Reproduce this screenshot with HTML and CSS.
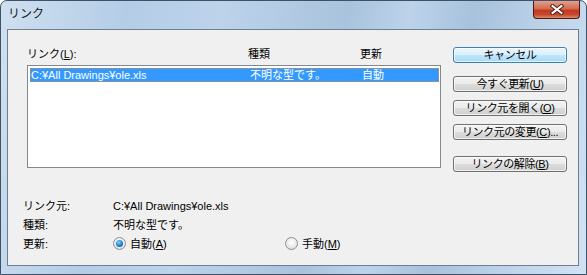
FILE: index.html
```html
<!DOCTYPE html>
<html>
<head>
    <meta charset="UTF-8">
    <title>リンク</title>
    <link rel="stylesheet" href="styles.css">
</head>
<body>
    <div class="window">
        <!-- タイトルバー -->
        <div class="titlebar">
            <span class="title">リンク</span>
            <div class="close-btn">
                <svg width="14" height="11" viewBox="0 0 14 11">
                    <path d="M2.5 2 L11.5 9 M11.5 2 L2.5 9" stroke="#4a2018" stroke-width="4" stroke-linecap="square"/>
                    <path d="M2.5 2 L11.5 9 M11.5 2 L2.5 9" stroke="#ffffff" stroke-width="2" stroke-linecap="square"/>
                </svg>
            </div>
        </div>

        <div class="client">
            <div class="main">
                <div class="left">
                    <div class="cols header">
                        <span>リンク(<u>L</u>):</span>
                        <span>種類</span>
                        <span>更新</span>
                    </div>
                    <div class="listbox">
                        <div class="cols row selected">
                            <span>C:¥All Drawings¥ole.xls</span>
                            <span>不明な型です。</span>
                            <span>自動</span>
                        </div>
                    </div>
                </div>
                <div class="buttons">
                    <button class="default">キャンセル</button>
                    <button>今すぐ更新(<u>U</u>)</button>
                    <button>リンク元を開く(<u>O</u>)</button>
                    <button>リンク元の変更(<u>C</u>)...</button>
                    <button class="gap">リンクの解除(<u>B</u>)</button>
                </div>
            </div>

            <!-- 詳細 -->
            <div class="info">
                <div class="info-row"><span class="label">リンク元:</span><span>C:¥All Drawings¥ole.xls</span></div>
                <div class="info-row"><span class="label">種類:</span><span>不明な型です。</span></div>
                <div class="info-row">
                    <span class="label">更新:</span>
                    <span class="radio checked"></span><span class="radio-text auto">自動(<u>A</u>)</span>
                    <span class="radio"></span><span class="radio-text">手動(<u>M</u>)</span>
                </div>
            </div>
        </div>
    </div>
</body>
</html>
```
FILE: styles.css
```css
body {
    margin: 0;
    background: #ffffff;
    font-family: "Liberation Sans", "Noto Sans CJK JP", sans-serif;
    font-size: 11px;
    color: #000;
}
.window {
    width: 587px;
    height: 275px;
    box-sizing: border-box;
    border: 1px solid #3d5268;
    border-radius: 7px 7px 0 0;
    background: linear-gradient(100deg, #cfe0f0 0%, #b4cde6 20%, #bcd3ea 35%, #a9c3dc 55%, #bcd3ea 65%, #a8c2dc 75%, #c2d7ec 90%, #d2e2f2 100%);
    display: flex;
    flex-direction: column;
    overflow: hidden;
}
.titlebar {
    height: 28px;
    flex-shrink: 0;
    display: flex;
    align-items: flex-start;
    justify-content: space-between;
}
.title {
    margin: 6px 0 0 7px;
    font-size: 12px;
    line-height: 14px;
    color: #1a1a1a;
}
.close-btn {
    width: 45px;
    height: 17px;
    margin: 0 6px 0 0;
    border: 1px solid #4a1c14;
    border-top: none;
    border-radius: 0 0 4px 4px;
    background: linear-gradient(#e4a08c 0%, #d36b52 45%, #c03b1f 55%, #c8472a 80%, #e08a6a 100%);
    display: flex;
    align-items: center;
    justify-content: center;
}
.client {
    flex: 1;
    margin: 0 7px 8px 6px;
    border: 1px solid #6e7f91;
    background: #f0f0f0;
    overflow: hidden;
}
.main {
    display: flex;
    height: 120px;
    padding: 17px 0 0 19px;
}
.left {
    width: 414px;
}
.cols {
    display: grid;
    grid-template-columns: 221px 112px 1fr;
}
.header {
    height: 18px;
    line-height: 14px;
}
.listbox {
    height: 99px;
    border: 1px solid #828790;
    background: #fff;
    padding: 2px 1px 0 2px;
}
.row {
    height: 12px;
    line-height: 12px;
    grid-template-columns: 219px 112px 1fr;
    border: 1px dotted #d88a3a;
}
.row.selected {
    background: #3399ff;
    color: #fff;
}
.buttons {
    display: flex;
    flex-direction: column;
    margin: 0 0 0 12px;
}
button {
    width: 114px;
    height: 18px;
    margin-bottom: 8px;
    padding: 0;
    font-family: inherit;
    font-size: 11px;
    letter-spacing: -0.4px;
    line-height: 14px;
    color: #000;
    border: 1px solid #707070;
    border-radius: 3px;
    background: linear-gradient(#f2f2f2 0%, #ebebeb 50%, #dddddd 51%, #cfcfcf 100%);
    box-shadow: inset 0 0 0 1px rgba(255, 255, 255, 0.7);
}
button.default {
    height: 19px;
    margin-bottom: 13px;
    border-color: #3c7fb1;
    background: linear-gradient(#eaf6fd 0%, #d9f0fc 50%, #bee6fd 51%, #a7d9f5 100%);
}
button.gap {
    margin-top: 8px;
}
.info {
    padding: 29px 0 0 15px;
}
.info-row {
    display: flex;
    align-items: center;
    height: 19px;
    line-height: 14px;
}
.label {
    width: 90px;
}
.radio {
    width: 11px;
    height: 11px;
    border: 1px solid #8e8f8f;
    border-radius: 50%;
    background: radial-gradient(circle at 50% 40%, #ffffff 0%, #e8e8e8 60%, #c9c9c9 100%);
    position: relative;
    margin-right: 4px;
}
.radio.checked::after {
    content: "";
    position: absolute;
    left: 2px;
    top: 2px;
    width: 7px;
    height: 7px;
    border-radius: 50%;
    background: radial-gradient(circle at 40% 35%, #8ad4ff 0%, #1a7fd0 55%, #0c4f8e 100%);
}
.radio-text.auto {
    width: 155px;
}
```
